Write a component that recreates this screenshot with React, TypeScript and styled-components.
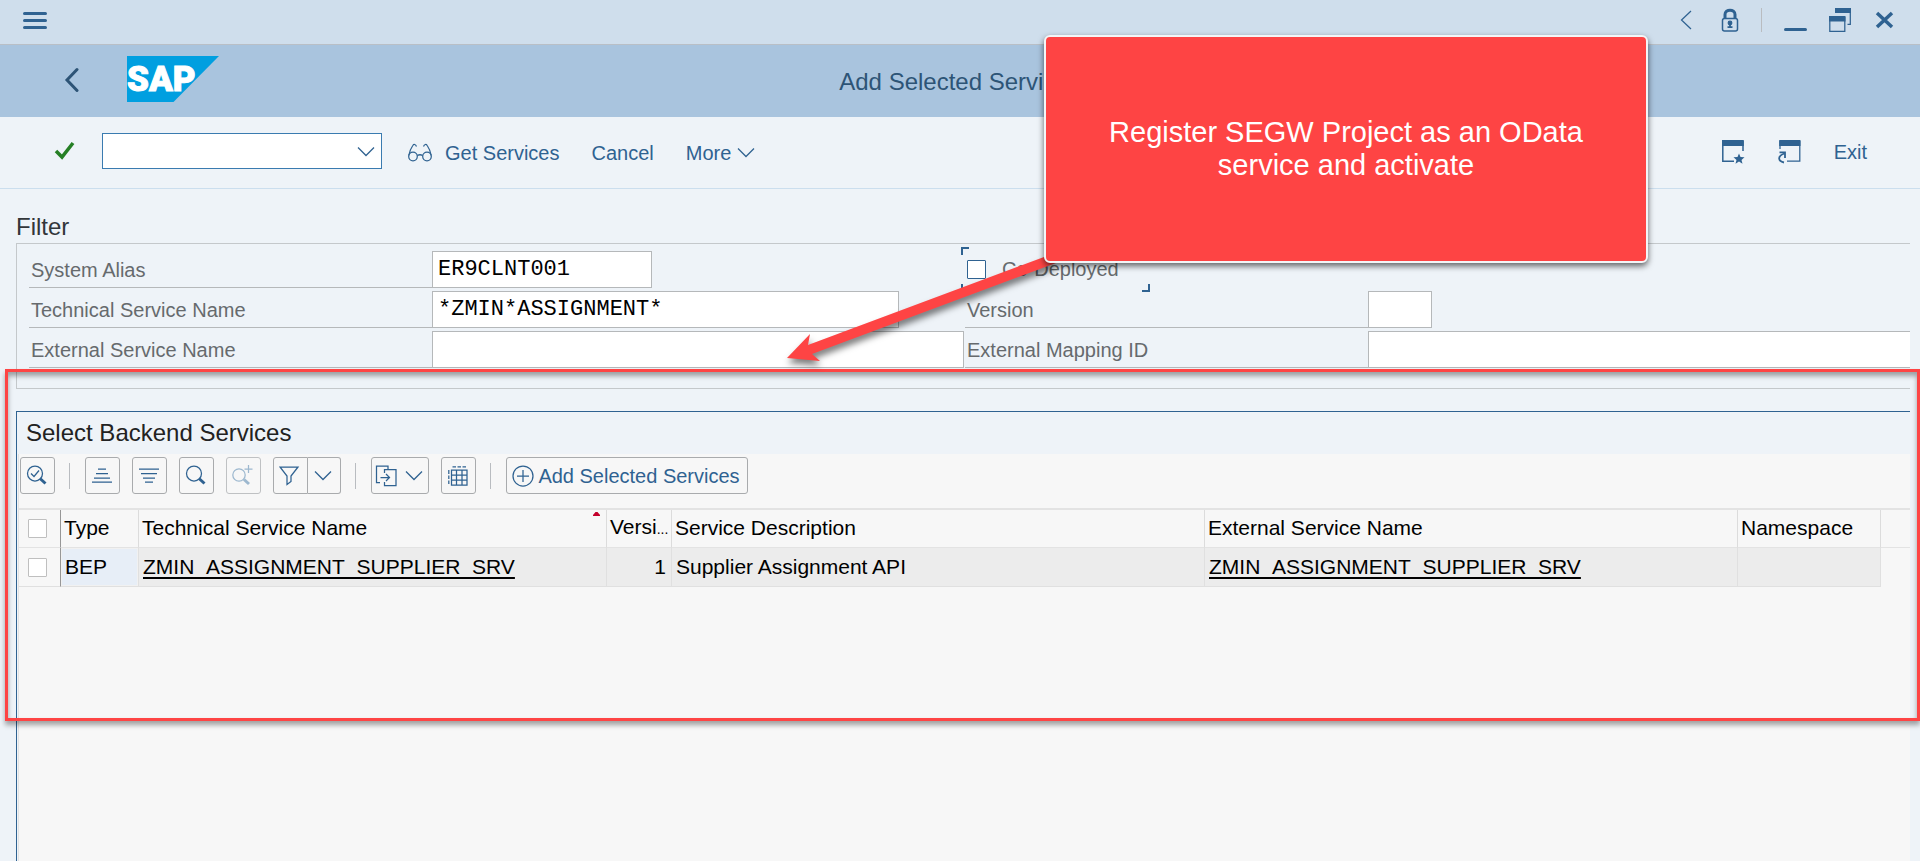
import React from "react";
import styled, { createGlobalStyle, css } from "styled-components";

const ink = "#2f6291";
const sans = '"Liberation Sans", Arial, sans-serif';
const mono = '"Liberation Mono", "DejaVu Sans Mono", monospace';

const GlobalStyle = createGlobalStyle`
  *, *::before, *::after { box-sizing: border-box; }
  body { margin: 0; background: #eef3f8; font-family: ${sans}; font-size: 20px; }
  button, input { font: inherit; color: inherit; margin: 0; }
  svg { display: block; flex: none; }
`;

const Page = styled.div`
  position: relative;
  display: flex;
  flex-direction: column;
  min-height: 100vh;
  overflow: hidden;
`;

const PlainButton = styled.button`
  display: inline-flex;
  align-items: center;
  padding: 0;
  border: 0;
  background: none;
  color: ${ink};
  line-height: 24px;
  white-space: nowrap;
  cursor: pointer;
`;

const SystemBar = styled.header`
  display: flex;
  align-items: center;
  justify-content: space-between;
  height: 45px;
  padding: 0 25px 4px 23px;
  background: #cfdeec;
  border-bottom: 1px solid #b9bfc6;
`;

const WindowControls = styled.div`
  display: flex;
  align-items: center;
  color: ${ink};
  gap: 22px;
`;

const Divider = styled.span<{ $height: number }>`
  flex: none;
  width: 1px;
  height: ${(p) => p.$height}px;
  background: #b9bcc0;
`;

const TitleBar = styled.div`
  display: grid;
  grid-template-columns: 1fr auto 1fr;
  align-items: center;
  height: 72px;
  padding: 0 64px;
  background: #a9c4de;
`;

const Brand = styled.div`
  display: flex;
  align-items: center;
  gap: 48px;
  padding-bottom: 4px;
`;

const PageTitle = styled.h1`
  margin: 0;
  padding-top: 2px;
  color: #2d5476;
  font-size: 24px;
  font-weight: 400;
  line-height: 28px;
`;

const CommandBar = styled.div`
  display: flex;
  align-items: center;
  height: 72px;
  padding: 0 53px 4px;
  border-bottom: 1px solid #cbdeee;
`;

const CommandBox = styled.div`
  display: flex;
  align-items: center;
  width: 280px;
  height: 36px;
  margin: 0 26px;
  padding: 2px 6px 0 0;
  border: 1px solid #3a7bb0;
  background: #fff;
`;

const CommandInput = styled.input`
  flex: 1;
  min-width: 0;
  height: 100%;
  padding: 0 6px;
  border: 0;
  outline: 0;
  background: transparent;
`;

const Commands = styled.nav`
  display: flex;
  flex: 1;
  gap: 32px;
  padding-top: 4px;
`;

const CommandsEnd = styled.div`
  display: flex;
  align-items: center;
  gap: 33px;
  padding-top: 2px;
`;

const Content = styled.main`
  display: flex;
  flex: 1;
  flex-direction: column;
  gap: 22px;
  margin: 24px 10px 0 16px;
`;

const SectionTitle = styled.h2`
  margin: 0 0 2px;
  color: #32363a;
  font-size: 24px;
  font-weight: 400;
  line-height: 28px;
`;

const FilterForm = styled.form`
  display: grid;
  grid-template-columns: 403px 533px 403px minmax(0, 1fr);
  grid-auto-rows: 37px;
  row-gap: 3px;
  padding: 7px 0 20px 12px;
  border: 1px solid #c4c8cb;
  border-right: 0;
`;

const FieldLabel = styled.label`
  padding-left: 2px;
  border-bottom: 1px solid #b5b8ba;
  color: #666a6d;
  line-height: 38px;
`;

const Field = styled.input<{ $width?: number }>`
  width: ${(p) => (p.$width ? `${p.$width}px` : "100%")};
  height: 37px;
  padding: 0 5px;
  border: 1px solid #b5b8ba;
  border-radius: 0;
  outline: 0;
  background: #fff;
  color: #000;
  font-family: ${mono};
  font-size: 22px;
  ${(p) => !p.$width && css`border-right: 0;`}
`;

const tick = `linear-gradient(${ink}, ${ink})`;

const CheckField = styled.label`
  position: relative;
  display: flex;
  align-items: center;
  grid-column: 3 / 5;
  gap: 16px;
  width: 185px;
  padding-left: 2px;
  color: #666a6d;

  &::before {
    content: "";
    position: absolute;
    inset: -4px 0 -4px -4px;
    background:
      ${tick} 0 0 / 8px 2px, ${tick} 0 0 / 2px 8px,
      ${tick} 100% 0 / 8px 2px, ${tick} 100% 0 / 2px 8px,
      ${tick} 0 100% / 8px 2px, ${tick} 0 100% / 2px 8px,
      ${tick} 100% 100% / 8px 2px, ${tick} 100% 100% / 2px 8px;
    background-repeat: no-repeat;
    pointer-events: none;
  }
`;

const CheckBox = styled.input.attrs({ type: "checkbox" })<{ $strong?: boolean }>`
  appearance: none;
  display: block;
  flex: none;
  width: 19px;
  height: 19px;
  border: 1px solid ${(p) => (p.$strong ? ink : "#bfbfbf")};
  border-radius: 1px;
  background: #fff;
`;

const Panel = styled.section`
  display: flex;
  flex: 1;
  flex-direction: column;
  border-top: 1px solid ${ink};
  border-left: 1px solid ${ink};
`;

const PanelTitle = styled.h2`
  margin: 0;
  padding-left: 9px;
  color: #222;
  font-size: 24px;
  font-weight: 400;
  line-height: 42px;
`;

const PanelBody = styled.div`
  flex: 1;
  min-height: 400px;
  margin-left: 1px;
  border-left: 1px solid #e2e2e2;
  background: #f7f7f7;
`;

const TableBar = styled.div`
  display: flex;
  align-items: center;
  height: 54px;
  padding: 0 1px 11px;
`;

const ToolGroup = styled.div`
  display: flex;
  gap: 12px;
`;

const BarDivider = styled(Divider)`
  margin: 0 15px 0 14px;
`;

const ToolButton = styled(PlainButton)<{ $width?: number; $join?: "left" | "right" }>`
  justify-content: center;
  gap: 4px;
  width: ${(p) => p.$width ?? 35}px;
  height: 37px;
  padding-right: 2px;
  border: 1px solid #a9abad;
  border-radius: 3px;
  ${(p) => p.$join === "left" && css`border-radius: 3px 0 0 3px;`}
  ${(p) => p.$join === "right" && css`border-left: 0; border-radius: 0 3px 3px 0;`}
  &:disabled { border-color: #bfc1c3; color: #9db8cf; cursor: default; }
`;

const SplitButton = styled.div`
  display: flex;
`;

const Grid = styled.table`
  width: 100%;
  table-layout: fixed;
  border-collapse: separate;
  border-spacing: 0;
  border-top: 2px solid #e3e3e3;
  color: #000;
  font-size: 21px;
  line-height: 24px;
`;

const HeadCell = styled.th<{ $rule?: string }>`
  position: relative;
  height: 38px;
  padding: 0 0 2px 3px;
  border-right: ${(p) => (p.$rule === "none" ? "0" : `1px solid ${p.$rule ?? "#dcdcdc"}`)};
  border-bottom: 1px solid #e3e3e3;
  font-weight: 400;
  text-align: left;
  white-space: nowrap;
`;

const Cell = styled.td<{ $kind?: "select" | "key" | "number" | "rest" }>`
  height: 39px;
  padding: 0 0 1px 4px;
  border-right: 1px solid #e0e0e0;
  border-bottom: 1px solid #e0e0e0;
  background: #ececec;
  white-space: nowrap;
  ${(p) => p.$kind === "select" && css`background: none; border-right-color: #979797; padding: 0 0 0 9px;`}
  ${(p) => p.$kind === "key" && css`background: #e7eef7; background-clip: padding-box; box-shadow: inset 0 0 0 1px #f1f1f1;`}
  ${(p) => p.$kind === "number" && css`padding: 0 5px 1px 0; text-align: right;`}
  ${(p) => p.$kind === "rest" && css`background: none; border: 0;`}
`;

const SelectHead = styled(HeadCell)`
  padding: 0 0 0 9px;
`;

const Dots = styled.span`
  font-size: 14px;
`;

const SortMark = styled.svg`
  position: absolute;
  top: 2px;
  right: 6px;
`;

const ServiceLink = styled.a`
  color: #000;
  text-decoration: underline;
  text-decoration-thickness: 2px;
  text-underline-offset: 3px;
  text-decoration-skip-ink: none;
`;

const Highlight = styled.div`
  position: absolute;
  top: 369px;
  right: 0;
  left: 5px;
  height: 352px;
  border: 3px solid #fe4444;
  box-shadow: 0 4px 5px rgba(0, 0, 0, 0.35), inset 0 4px 5px rgba(0, 0, 0, 0.35);
  pointer-events: none;
`;

const Arrow = styled.svg`
  position: absolute;
  top: 250px;
  left: 780px;
  filter: drop-shadow(1px 5px 3px rgba(0, 0, 0, 0.5));
  pointer-events: none;
`;

const Callout = styled.aside`
  position: absolute;
  top: 35px;
  left: 1044px;
  display: flex;
  align-items: center;
  justify-content: center;
  width: 604px;
  height: 228px;
  padding: 0 50px;
  border: 2px solid #f3f5f7;
  border-radius: 6px;
  background: #fe4444;
  box-shadow: 0 3px 6px rgba(0, 0, 0, 0.6);
  color: #fff;
  font-size: 29px;
  line-height: 33px;
  text-align: center;
`;

type DrawingProps = { w: number; h: number; sw?: number; children: React.ReactNode };

const Drawing = ({ w, h, sw = 1.25, children }: DrawingProps) => (
  <svg width={w} height={h} viewBox={`0 0 ${w} ${h}`} fill="none" stroke="currentColor" strokeWidth={sw} aria-hidden="true">
    {children}
  </svg>
);

const ChevronDown = () => (
  <Drawing w={18} h={11}>
    <path d="M1 1.5 9 9.5 17 1.5" />
  </Drawing>
);

const Logo = () => (
  <svg width="92" height="46" viewBox="0 0 92 46" role="img" aria-label="SAP">
    <path d="M0 0H92L46.500 46H0Z" fill="#009fe0" />
    <text x="0" y="35" fill="#fff" stroke="#fff" strokeWidth="1" fontFamily='Roboto, "Liberation Sans", sans-serif' fontWeight="900" fontSize="35">
      SAP
    </text>
  </svg>
);

const Magnifier = () => (
  <>
    <circle cx="9" cy="8.500" r="7.500" />
    <path d="M14 13.500 19.500 18.500" strokeWidth="3" />
  </>
);

const filterRows = [
  { id: "alias", label: "System Alias", value: "ER9CLNT001", width: 220 },
  { id: "technical", label: "Technical Service Name", value: "*ZMIN*ASSIGNMENT*", width: 467 },
  { id: "external", label: "External Service Name", value: "", width: 532 },
];

const columnWidths = [42, 78, 468, 65, 533, 533, 143];

const services = [
  { type: "BEP", name: "ZMIN_ASSIGNMENT_SUPPLIER_SRV", version: 1, description: "Supplier Assignment API", namespace: "" },
];

const FilterRow = ({ row }: { row: (typeof filterRows)[number] }) => (
  <>
    <FieldLabel htmlFor={row.id}>{row.label}</FieldLabel>
    <Field id={row.id} defaultValue={row.value} $width={row.width} />
  </>
);

export default function App() {
  return (
    <Page>
      <GlobalStyle />
      <SystemBar>
        <PlainButton aria-label="Menu">
          <Drawing w={24} h={17} sw={3}>
            <path d="M1.500 1.500H22.500M1.500 8.500H22.500M1.500 15.500H22.500" strokeLinecap="round" />
          </Drawing>
        </PlainButton>
        <WindowControls>
          <PlainButton aria-label="Previous">
            <Drawing w={20} h={20}>
              <path d="M12 1 2.500 10 12 19" />
            </Drawing>
          </PlainButton>
          <PlainButton aria-label="Locked">
            <Drawing w={18} h={24}>
              <rect x="1.500" y="10.500" width="15" height="12.500" rx="2" strokeWidth="1.500" />
              <path d="M4 11V6.500C4 0.800 14 0.800 14 6.500V11" strokeWidth="3" />
              <circle cx="9" cy="15" r="1.800" fill="currentColor" />
              <path d="M9 15V19M6.500 19.200H11.500" strokeWidth="1.800" />
            </Drawing>
          </PlainButton>
          <Divider $height={24} />
          <PlainButton aria-label="Minimize">
            <Drawing w={23} h={24} sw={3}>
              <path d="M1.500 21.500H21.500" strokeLinecap="round" />
            </Drawing>
          </PlainButton>
          <PlainButton aria-label="Restore">
            <Drawing w={24} h={24}>
              <path d="M6 0H22V5H6Z" fill="currentColor" stroke="none" />
              <path d="M21.300 4V16.300H18.500M0.800 9V23.300H15.800V9" />
              <path d="M0 8H16.500V13.500H0Z" fill="currentColor" stroke="none" />
            </Drawing>
          </PlainButton>
          <PlainButton aria-label="Close">
            <Drawing w={20} h={18} sw={3.5}>
              <path d="M2 2 17 16M17 2 2 16" />
            </Drawing>
          </PlainButton>
        </WindowControls>
      </SystemBar>

      <TitleBar>
        <Brand>
          <PlainButton aria-label="Back">
            <Drawing w={15} h={26} sw={3}>
              <path d="M13 3.500 3 14 13 24.500" stroke="#2d5476" strokeLinecap="round" />
            </Drawing>
          </PlainButton>
          <Logo />
        </Brand>
        <PageTitle>Add Selected Services</PageTitle>
      </TitleBar>

      <CommandBar>
        <PlainButton aria-label="Enter">
          <Drawing w={23} h={22} sw={3.5}>
            <path d="M3 11 9 17 20 3" stroke="#257f25" />
          </Drawing>
        </PlainButton>
        <CommandBox>
          <CommandInput aria-label="Command" />
          <PlainButton aria-label="Show history">
            <ChevronDown />
          </PlainButton>
        </CommandBox>
        <Commands>
          <PlainButton>
            <Drawing w={37} h={20}>
              <circle cx="5" cy="13.500" r="4.300" />
              <circle cx="19" cy="13.500" r="4.300" />
              <path d="M9.300 12.500Q12 11 14.700 12.500M0.800 12.500C1.500 9 3 5 4.800 2.500 5.800 1 7.500 1 8.500 3.500M23.200 12.500C22.500 9 21 5 19.200 2.500 18.200 1 16.500 1 15.500 3.500" />
            </Drawing>
            Get Services
          </PlainButton>
          <PlainButton>Cancel</PlainButton>
          <PlainButton>
            More&nbsp;
            <ChevronDown />
          </PlainButton>
        </Commands>
        <CommandsEnd>
          <PlainButton aria-label="Create favorite">
            <Drawing w={23} h={24}>
              <path d="M0.800 1V21.200H12M21 1V11" strokeWidth="1.500" />
              <path d="M0 0H21.800V6H0Z" fill="currentColor" stroke="none" />
              <path d="m17 13.500 1.500 3.500 4 .3-3 2.600 1 3.800-3.500-2.100-3.500 2.100 1-3.800-3-2.600 4-.3z" fill="currentColor" stroke="none" />
            </Drawing>
          </PlainButton>
          <PlainButton aria-label="Create shortcut">
            <Drawing w={23} h={24}>
              <path d="M2 9V1M21.800 1V21.200H9" />
              <path d="M1.200 0H22.500V6H1.200Z" fill="currentColor" stroke="none" />
              <path d="M6 22.500C-1 21 0 15.500 6.500 13.500" strokeWidth="1.800" />
              <path d="M1.500 12.300H7V18" strokeWidth="1.800" />
            </Drawing>
          </PlainButton>
          <PlainButton>Exit</PlainButton>
        </CommandsEnd>
      </CommandBar>

      <Content>
        <section>
          <SectionTitle>Filter</SectionTitle>
          <FilterForm>
            <FilterRow row={filterRows[0]} />
            <CheckField>
              <CheckBox $strong />
              Co-Deployed
            </CheckField>
            <FilterRow row={filterRows[1]} />
            <FieldLabel htmlFor="version">Version</FieldLabel>
            <Field id="version" $width={64} />
            <FilterRow row={filterRows[2]} />
            <FieldLabel htmlFor="mapping">External Mapping ID</FieldLabel>
            <Field id="mapping" />
          </FilterForm>
        </section>

        <Panel>
          <PanelTitle>Select Backend Services</PanelTitle>
          <PanelBody>
            <TableBar>
              <ToolButton aria-label="Details">
                <Drawing w={21} h={21}>
                  <Magnifier />
                  <path d="m5 8.500 3 3 5-6" />
                </Drawing>
              </ToolButton>
              <BarDivider $height={26} />
              <ToolGroup>
                <ToolButton aria-label="Sort ascending">
                  <Drawing w={20} h={15}>
                    <path d="M6 1H14M4 5.500H16M2 10H18M0 14H20" />
                  </Drawing>
                </ToolButton>
                <ToolButton aria-label="Sort descending">
                  <Drawing w={20} h={15}>
                    <path d="M0 1H20M2 5.500H18M4 10H16M6 14H14" />
                  </Drawing>
                </ToolButton>
                <ToolButton aria-label="Find">
                  <Drawing w={21} h={21}>
                    <Magnifier />
                  </Drawing>
                </ToolButton>
                <ToolButton aria-label="Find next" disabled>
                  <Drawing w={21} h={21}>
                    <circle cx="7" cy="10" r="6.200" />
                    <path d="M12 14.500 17 19" strokeWidth="3" />
                    <path d="M16.500 0V8M12.500 4H20.500" />
                  </Drawing>
                </ToolButton>
                <SplitButton>
                  <ToolButton aria-label="Set filter" $join="left">
                    <Drawing w={22} h={20}>
                      <path d="M1 1H19L12 10V15.500L8 18.500V10Z" />
                    </Drawing>
                  </ToolButton>
                  <ToolButton aria-label="Filter options" $join="right" $width={33}>
                    <ChevronDown />
                  </ToolButton>
                </SplitButton>
              </ToolGroup>
              <BarDivider $height={26} />
              <ToolGroup>
                <ToolButton aria-label="Export" $width={58}>
                  <Drawing w={26} h={22}>
                    <path d="M5 17.500H1.500V1H13V4.500M9.500 8V4.500H21V20.500H9.500V17M5.500 12.500H14.500M11 9 14.500 12.500 11 16" />
                  </Drawing>
                  <ChevronDown />
                </ToolButton>
                <ToolButton aria-label="Change layout">
                  <Drawing w={20} h={20}>
                    <path d="M3.500 4H19V19H3.500ZM8.500 4V19M14 4V19M3.500 9H19M3.500 14H19" />
                    <path d="M4.500 0.800H8M9.500 0.800H13M14.500 0.800H18M0.800 4V8M0.800 9.500V13M0.800 14.500V18" />
                  </Drawing>
                </ToolButton>
              </ToolGroup>
              <BarDivider $height={26} />
              <ToolButton $width={242}>
                <Drawing w={22} h={22}>
                  <circle cx="11" cy="11" r="10" />
                  <path d="M11 5V17M5 11H17" />
                </Drawing>
                Add Selected Services
              </ToolButton>
            </TableBar>

            <Grid>
              <colgroup>
                {columnWidths.map((width, i) => (
                  <col key={i} width={width} />
                ))}
                <col />
              </colgroup>
              <thead>
                <tr>
                  <SelectHead $rule="#979797">
                    <CheckBox aria-label="Select all rows" />
                  </SelectHead>
                  <HeadCell>Type</HeadCell>
                  <HeadCell>
                    Technical Service Name
                    <SortMark width="7" height="4" viewBox="0 0 7 4" aria-hidden="true">
                      <path d="M0 4V3L2.500 0H4.500L7 3V4Z" fill="#c4002b" />
                    </SortMark>
                  </HeadCell>
                  <HeadCell>
                    Versi<Dots>...</Dots>
                  </HeadCell>
                  <HeadCell>Service Description</HeadCell>
                  <HeadCell>External Service Name</HeadCell>
                  <HeadCell>Namespace</HeadCell>
                  <HeadCell $rule="none" />
                </tr>
              </thead>
              <tbody>
                {services.map((s) => (
                  <tr key={s.name}>
                    <Cell $kind="select">
                      <CheckBox aria-label={`Select ${s.name}`} />
                    </Cell>
                    <Cell $kind="key">{s.type}</Cell>
                    <Cell>
                      <ServiceLink href="#technical">{s.name}</ServiceLink>
                    </Cell>
                    <Cell $kind="number">{s.version}</Cell>
                    <Cell>{s.description}</Cell>
                    <Cell>
                      <ServiceLink href="#external">{s.name}</ServiceLink>
                    </Cell>
                    <Cell>{s.namespace}</Cell>
                    <Cell $kind="rest" />
                  </tr>
                ))}
              </tbody>
            </Grid>
          </PanelBody>
        </Panel>
      </Content>

      <Highlight />
      <Arrow width="290" height="120" viewBox="780 250 290 120" aria-hidden="true">
        <path d="M787 358 810 334 808 345 1044 257 1056 263 812 354 820 361Z" fill="#fe4444" />
      </Arrow>
      <Callout>Register SEGW Project as an OData service and activate</Callout>
    </Page>
  );
}
